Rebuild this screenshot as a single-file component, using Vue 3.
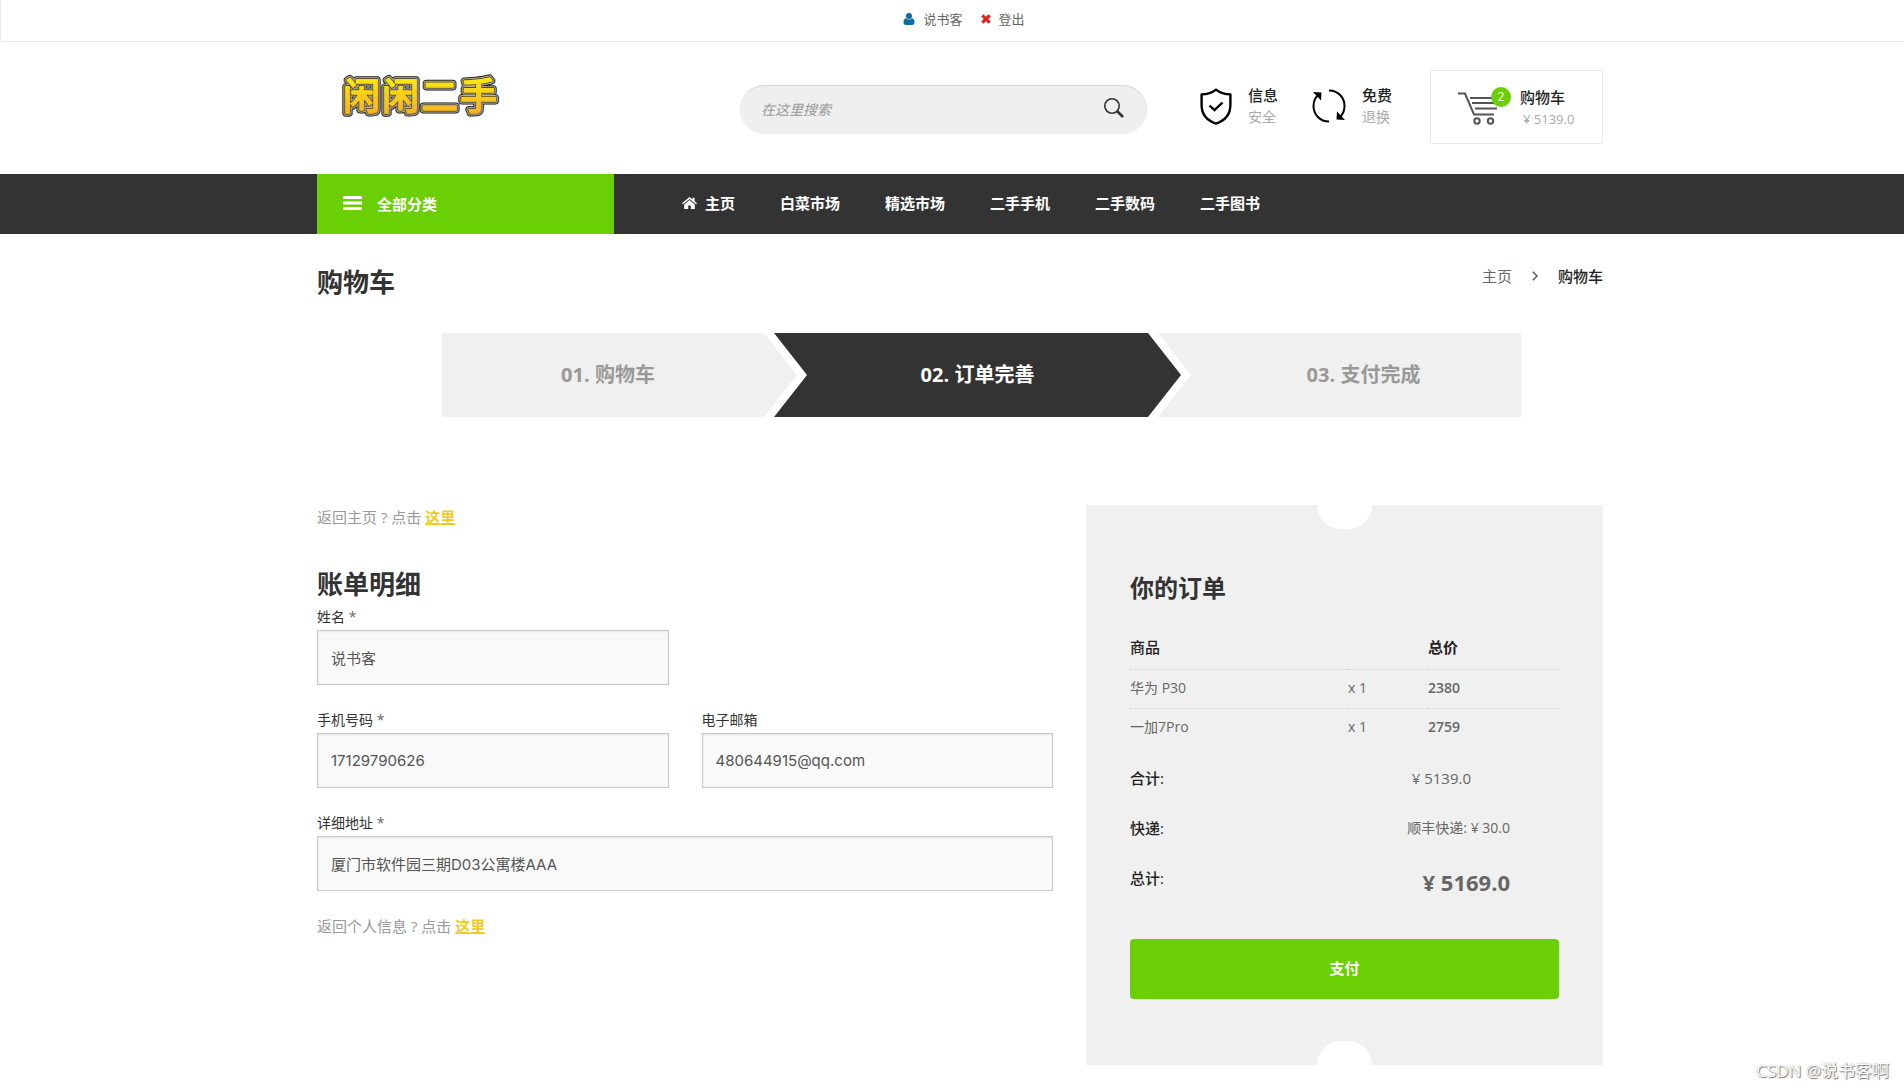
<script setup>
import { ref } from 'vue'

const keyword = ref('')
const navItems = ['白菜市场', '精选市场', '二手手机', '二手数码', '二手图书']
const steps = [
  { label: '01. 购物车', kind: 'first' },
  { label: '02. 订单完善', kind: 'current' },
  { label: '03. 支付完成', kind: 'last' },
]
const form = ref({
  name: '说书客',
  phone: '17129790626',
  email: '480644915@qq.com',
  address: '厦门市软件园三期D03公寓楼AAA',
})
const items = [
  { name: '华为 P30', qty: 'x 1', price: '2380' },
  { name: '一加7Pro', qty: 'x 1', price: '2759' },
]
</script>

<template>
  <div class="page">
    <div class="topbar">
      <a href="#" class="top-link">
        <svg width="12" height="12" viewBox="0 0 12 12" fill="#0e6ba3">
          <circle cx="6" cy="3" r="3" />
          <path d="M3 5.200C1 5.400.5 7.500.5 9.500.5 11 1.400 12 3 12h6c1.600 0 2.500-1 2.500-2.500 0-2-.5-4.100-2.500-4.300a4 4 0 0 1-6 0z" />
        </svg>
        说书客
      </a>
      <a href="#" class="top-link">
        <svg width="10" height="10" viewBox="0 0 10 10" stroke="#e02222" stroke-width="3.200">
          <path d="M1.300 1.300l7.400 7.400M8.700 1.300L1.300 8.700" />
        </svg>
        登出
      </a>
    </div>

    <header class="shell">
      <div class="container header">
        <a href="#" class="logo" aria-label="闲闲二手">
          <svg width="168" height="56" viewBox="0 0 168 56">
            <defs>
              <linearGradient id="gold" x1="0" y1="0" x2="0" y2="1">
                <stop offset="0.200" stop-color="#fbe90c" />
                <stop offset="0.900" stop-color="#f3b02c" />
              </linearGradient>
              <text id="brand" x="6 45 84 123" y="41" class="brand">闲闲二手</text>
            </defs>
            <use href="#brand" fill="#222" stroke="#222" stroke-width="7" />
            <use href="#brand" fill="#b5b1a0" stroke="#b5b1a0" stroke-width="5" />
            <use href="#brand" fill="#3a3520" stroke="#3a3520" stroke-width="3" />
            <use href="#brand" fill="url(#gold)" stroke="url(#gold)" stroke-width="1.500" />
          </svg>
        </a>
        <form class="search" @submit.prevent>
          <input v-model="keyword" type="text" placeholder="在这里搜索" aria-label="搜索" />
          <button type="submit" aria-label="搜索">
            <svg width="20" height="20" viewBox="0 0 20 20" fill="none" stroke="#333">
              <circle cx="8" cy="8" r="7.200" stroke-width="1.600" />
              <path d="M13 13l6 6" stroke-width="2.600" />
            </svg>
          </button>
        </form>
        <div class="header-right">
          <div class="service">
            <svg width="32" height="37" viewBox="0 0 32 37" fill="none" stroke="#000" stroke-width="2.400">
              <path d="M16 1.600C12 4.800 7 6.300 1.600 6.400V17c0 9 5.400 15.500 14.400 18.600C25 32.500 30.400 26 30.400 17V6.400C25 6.300 20 4.800 16 1.600z" stroke-linejoin="round" />
              <path d="M9.500 17.500l5 4.700 8-7.700" stroke-width="2.400" />
            </svg>
            <div class="service-text"><strong>信息</strong><span>安全</span></div>
          </div>
          <div class="service second">
            <svg width="34" height="34" viewBox="0 0 34 34" fill="none" stroke="#000" stroke-width="2">
              <path d="M17 1.500C26 1.500 32.500 8.500 32.500 17c0 5-2 8.800-5 11.500" />
              <path d="M17 32.500C8 32.500 1.500 25.500 1.500 17c0-5 2-8.800 5-11.500" />
              <path d="M1 3l8.500.5-.5 8zM33 31l-8.500-.5.5-8z" fill="#000" stroke="none" />
            </svg>
            <div class="service-text"><strong>免费</strong><span>退换</span></div>
          </div>
          <a href="#" class="cart">
            <span class="cart-icon">
              <svg width="40" height="33" viewBox="0 0 40 33" fill="none" stroke="#555" stroke-width="2">
                <path d="M0 1.500h7l9 21h20" />
                <path d="M12 6h27M14 11h24M17 16.500h22" />
                <circle cx="19" cy="29" r="2.700" />
                <circle cx="32.500" cy="29" r="2.700" />
              </svg>
              <span class="badge">2</span>
            </span>
            <span class="cart-text"><strong>购物车</strong><span>¥ 5139.0</span></span>
          </a>
        </div>
      </div>
    </header>

    <nav class="shell navbar">
      <div class="container nav-inner">
        <button type="button" class="categories">
          <svg width="19" height="14" viewBox="0 0 19 14" fill="#fff">
            <path d="M0 0h19v3H0zM0 5.500h19v3H0zM0 11h19v3H0z" />
          </svg>
          全部分类
        </button>
        <div class="nav-links">
          <a href="#">
            <svg width="15" height="12" viewBox="0 0 15 12" fill="#fff">
              <path d="M7.500 0L0 6.300l.9 1L7.500 1.900l6.600 5.400.9-1-2.400-2V.8h-2v1.800z" />
              <path d="M7.500 3L2.200 7.400V12h4V8.500h2.600V12h4V7.400z" />
            </svg>
            主页
          </a>
          <a v-for="item in navItems" :key="item" href="#">{{ item }}</a>
        </div>
      </div>
    </nav>

    <main class="shell">
      <div class="container">
        <div class="title-row">
          <h1>购物车</h1>
          <div class="breadcrumb">
            <a href="#">主页</a>
            <svg width="6" height="10" viewBox="0 0 6 10" fill="none" stroke="#555" stroke-width="1.400"><path d="M.8.8L5 5 .8 9.200" /></svg>
            <strong>购物车</strong>
          </div>
        </div>

        <ol class="steps">
          <li v-for="step in steps" :key="step.label" :class="step.kind">{{ step.label }}</li>
        </ol>

        <div class="columns">
          <section class="billing">
            <p class="hint">返回主页 ? 点击 <a href="#">这里</a></p>
            <h2>账单明细</h2>
            <div class="fields">
              <div class="field">
                <label for="name">姓名 <span>*</span></label>
                <input id="name" v-model="form.name" type="text" />
              </div>
              <div class="field start">
                <label for="phone">手机号码 <span>*</span></label>
                <input id="phone" v-model="form.phone" type="text" />
              </div>
              <div class="field">
                <label for="email">电子邮箱</label>
                <input id="email" v-model="form.email" type="text" />
              </div>
              <div class="field wide">
                <label for="address">详细地址 <span>*</span></label>
                <input id="address" v-model="form.address" type="text" />
              </div>
            </div>
            <p class="hint">返回个人信息 ? 点击 <a href="#">这里</a></p>
          </section>

          <section class="order">
            <h2>你的订单</h2>
            <table>
              <thead>
                <tr><th>商品</th><th class="qty"></th><th class="price">总价</th></tr>
              </thead>
              <tbody>
                <tr v-for="item in items" :key="item.name">
                  <td>{{ item.name }}</td>
                  <td class="qty">{{ item.qty }}</td>
                  <td class="price">{{ item.price }}</td>
                </tr>
              </tbody>
            </table>
            <dl>
              <div class="sum"><dt>合计:</dt><dd class="subtotal">¥ 5139.0</dd></div>
              <div class="sum"><dt>快递:</dt><dd>顺丰快递: ¥ 30.0</dd></div>
              <div class="sum"><dt>总计:</dt><dd class="total">¥ 5169.0</dd></div>
            </dl>
            <button type="button" class="pay">支付</button>
          </section>
        </div>
      </div>
    </main>
    <div class="watermark">CSDN @说书客啊</div>
  </div>
</template>

<style>
body {
  margin: 0;
  background: #fff;
}
</style>

<style scoped>
.page {
  position: relative;
  padding-bottom: 25px;
  font-family: "Open Sans", "Noto Sans CJK SC", sans-serif;
  font-size: 15px;
  line-height: 24px;
  color: #666;
}
.page * {
  box-sizing: border-box;
}
a {
  color: inherit;
  text-decoration: none;
}
button,
input {
  font-family: inherit;
  border: 0;
}
h1,
h2,
p,
ol,
dl,
dd {
  margin: 0;
  padding: 0;
}
strong {
  font-weight: 500;
  color: #222;
}
.shell {
  padding-left: 16px;
}
.container {
  max-width: 1286px;
  margin: 0 auto;
}

.topbar {
  display: flex;
  justify-content: center;
  gap: 18px;
  height: 42px;
  padding: 7px 0 0 23px;
  border-left: 1px solid #ebebeb;
  border-bottom: 1px solid #ebebeb;
  font-size: 13px;
}
.top-link {
  display: flex;
  align-items: center;
  gap: 8px;
  height: 24px;
}

.header {
  display: grid;
  grid-template-columns: 423fr 407fr 456fr;
  align-items: start;
  height: 132px;
}
.logo {
  margin: 27px 0 0 20px;
}
.logo svg {
  display: block;
}
.brand {
  font-family: "Noto Sans CJK SC", sans-serif;
  font-size: 37px;
  font-weight: 500;
  stroke-linejoin: round;
}
.search {
  display: flex;
  align-items: center;
  height: 49px;
  margin-top: 43px;
  padding: 0 23px 0 21px;
  border-radius: 25px;
  background: #efefef;
  box-shadow: inset 0 1px 1px #d8d8d8;
}
.search input {
  flex: 1;
  min-width: 0;
  padding: 0;
  background: none;
  font-size: 14px;
  font-style: italic;
  color: #666;
  outline: none;
}
.search input::placeholder {
  color: #999;
}
.search button {
  display: flex;
  padding: 0 0 4px;
  background: none;
}
.header-right {
  display: flex;
  justify-content: flex-end;
  align-items: flex-start;
}
.service {
  display: flex;
  align-items: center;
  gap: 16px;
  margin-top: 42px;
}
.second {
  margin-left: 34px;
}
.service-text,
.cart-text {
  display: flex;
  flex-direction: column;
  line-height: 22px;
}
.service-text span {
  font-size: 14px;
  color: #aaa;
}
.cart {
  display: flex;
  width: 173px;
  height: 74px;
  margin: 28px 0 0 38px;
  padding: 15px 0 0 27px;
  border: 1px solid #ebebeb;
}
.cart-icon {
  position: relative;
  width: 62px;
  padding-top: 6px;
}
.badge {
  position: absolute;
  top: 1px;
  left: 33px;
  width: 20px;
  height: 20px;
  border-radius: 50%;
  background: #6acf05;
  color: #fff;
  font-size: 12px;
  line-height: 20px;
  text-align: center;
}
.cart-text span {
  padding-left: 3px;
  font-size: 13px;
  color: #aaa;
}

.navbar {
  background: #333;
}
.nav-inner {
  display: flex;
  height: 60px;
}
.categories {
  display: flex;
  align-items: center;
  gap: 15px;
  width: 297px;
  padding: 0 26px 2px;
  background: #6acf05;
  color: #fff;
  font-size: 15px;
  font-weight: 700;
}
.nav-links {
  display: flex;
  align-items: center;
  gap: 45px;
  padding: 0 0 2px 68px;
  color: #fff;
  font-weight: 700;
}
.nav-links a {
  display: flex;
  align-items: center;
  gap: 8px;
}

.title-row {
  display: flex;
  justify-content: space-between;
  align-items: flex-start;
  padding-top: 30px;
}
h1,
h2 {
  font-size: 26px;
  line-height: 36px;
  font-weight: 700;
  color: #333;
}
.breadcrumb {
  display: flex;
  align-items: center;
  gap: 20px;
}
.steps {
  display: grid;
  grid-template-columns: 332fr 384fr 363fr;
  margin: 33px 82px 0 125px;
  list-style: none;
  font-size: 20px;
  line-height: 84px;
  font-weight: 700;
  text-align: center;
  color: #999;
}
.steps li {
  background: #f0f0f0;
}
.steps .first {
  margin-right: -23px;
  padding-right: 23px;
  clip-path: polygon(0 0, calc(100% - 33px) 0, 100% 50%, calc(100% - 33px) 100%, 0 100%);
}
.steps .current {
  margin-right: -23px;
  background: #333;
  color: #fff;
  clip-path: polygon(0 0, calc(100% - 33px) 0, 100% 50%, calc(100% - 33px) 100%, 0 100%, 33px 50%);
}
.steps .last {
  padding-left: 48px;
  clip-path: polygon(0 0, 100% 0, 100% 100%, 0 100%, 33px 50%);
}

.columns {
  display: grid;
  grid-template-columns: 736fr 517fr;
  gap: 33px;
  align-items: start;
  margin-top: 88px;
}
.hint {
  color: #999;
}
.hint a {
  color: #eecb1e;
  font-weight: 700;
  text-decoration: underline;
}
.billing h2 {
  margin-top: 37px;
}
.fields {
  display: grid;
  grid-template-columns: 1fr 1fr;
  gap: 23px 33px;
  margin: 3px 0 23px;
}
.start {
  grid-column-start: 1;
}
.wide {
  grid-column: 1 / -1;
}
.field label {
  display: block;
  padding-bottom: 1px;
  font-size: 14px;
  color: #333;
}
.field label span {
  color: #666;
}
.field input {
  display: block;
  width: 100%;
  height: 55px;
  padding: 0 13px;
  border: 1px solid #c8c8c8;
  background: #f9f9f9;
  box-shadow: inset 0 1px 2px #e4e4e4;
  font-family: Inter, "Noto Sans CJK SC", sans-serif;
  font-size: 15px;
  color: #555;
}

.order {
  position: relative;
  padding: 65px 44px 66px;
  background: #f0f0f0;
  font-size: 14px;
}
.order::before,
.order::after {
  content: "";
  position: absolute;
  left: calc(50% - 28px);
  width: 55px;
  height: 24px;
  background: #fff;
}
.order::before {
  top: 0;
  border-radius: 0 0 27px 27px;
}
.order::after {
  bottom: 0;
  border-radius: 27px 27px 0 0;
}
.order h2 {
  font-size: 24px;
}
table {
  width: 100%;
  margin-top: 26px;
  border-collapse: collapse;
  table-layout: fixed;
}
th {
  height: 37px;
  padding: 0 0 6px;
  font-size: 15px;
  font-weight: 500;
  text-align: left;
  color: #222;
}
td {
  height: 39px;
  padding: 0 0 1px;
  border-top: 1px dotted #d0d0d0;
}
.qty {
  width: 80px;
}
.price {
  width: 131px;
  font-weight: 600;
}
dl {
  padding: 19px 49px 0 0;
}
.sum {
  display: flex;
  justify-content: space-between;
  height: 50px;
}
dt {
  font-size: 15px;
  font-weight: 500;
  color: #222;
}
.subtotal {
  padding-right: 39px;
  font-size: 15px;
}
.total {
  font-size: 22px;
  line-height: 32px;
  font-weight: 700;
}
.pay {
  display: block;
  width: 100%;
  height: 60px;
  margin-top: 23px;
  padding: 0 0 3px;
  border-radius: 4px;
  background: #6acf05;
  color: #fff;
  font-size: 15px;
  font-weight: 700;
}
.watermark {
  position: absolute;
  right: 15px;
  bottom: 7px;
  font-size: 17px;
  color: #fff;
  text-shadow: 1px 1px 1px #777, 0 0 1px #999;
}
</style>
